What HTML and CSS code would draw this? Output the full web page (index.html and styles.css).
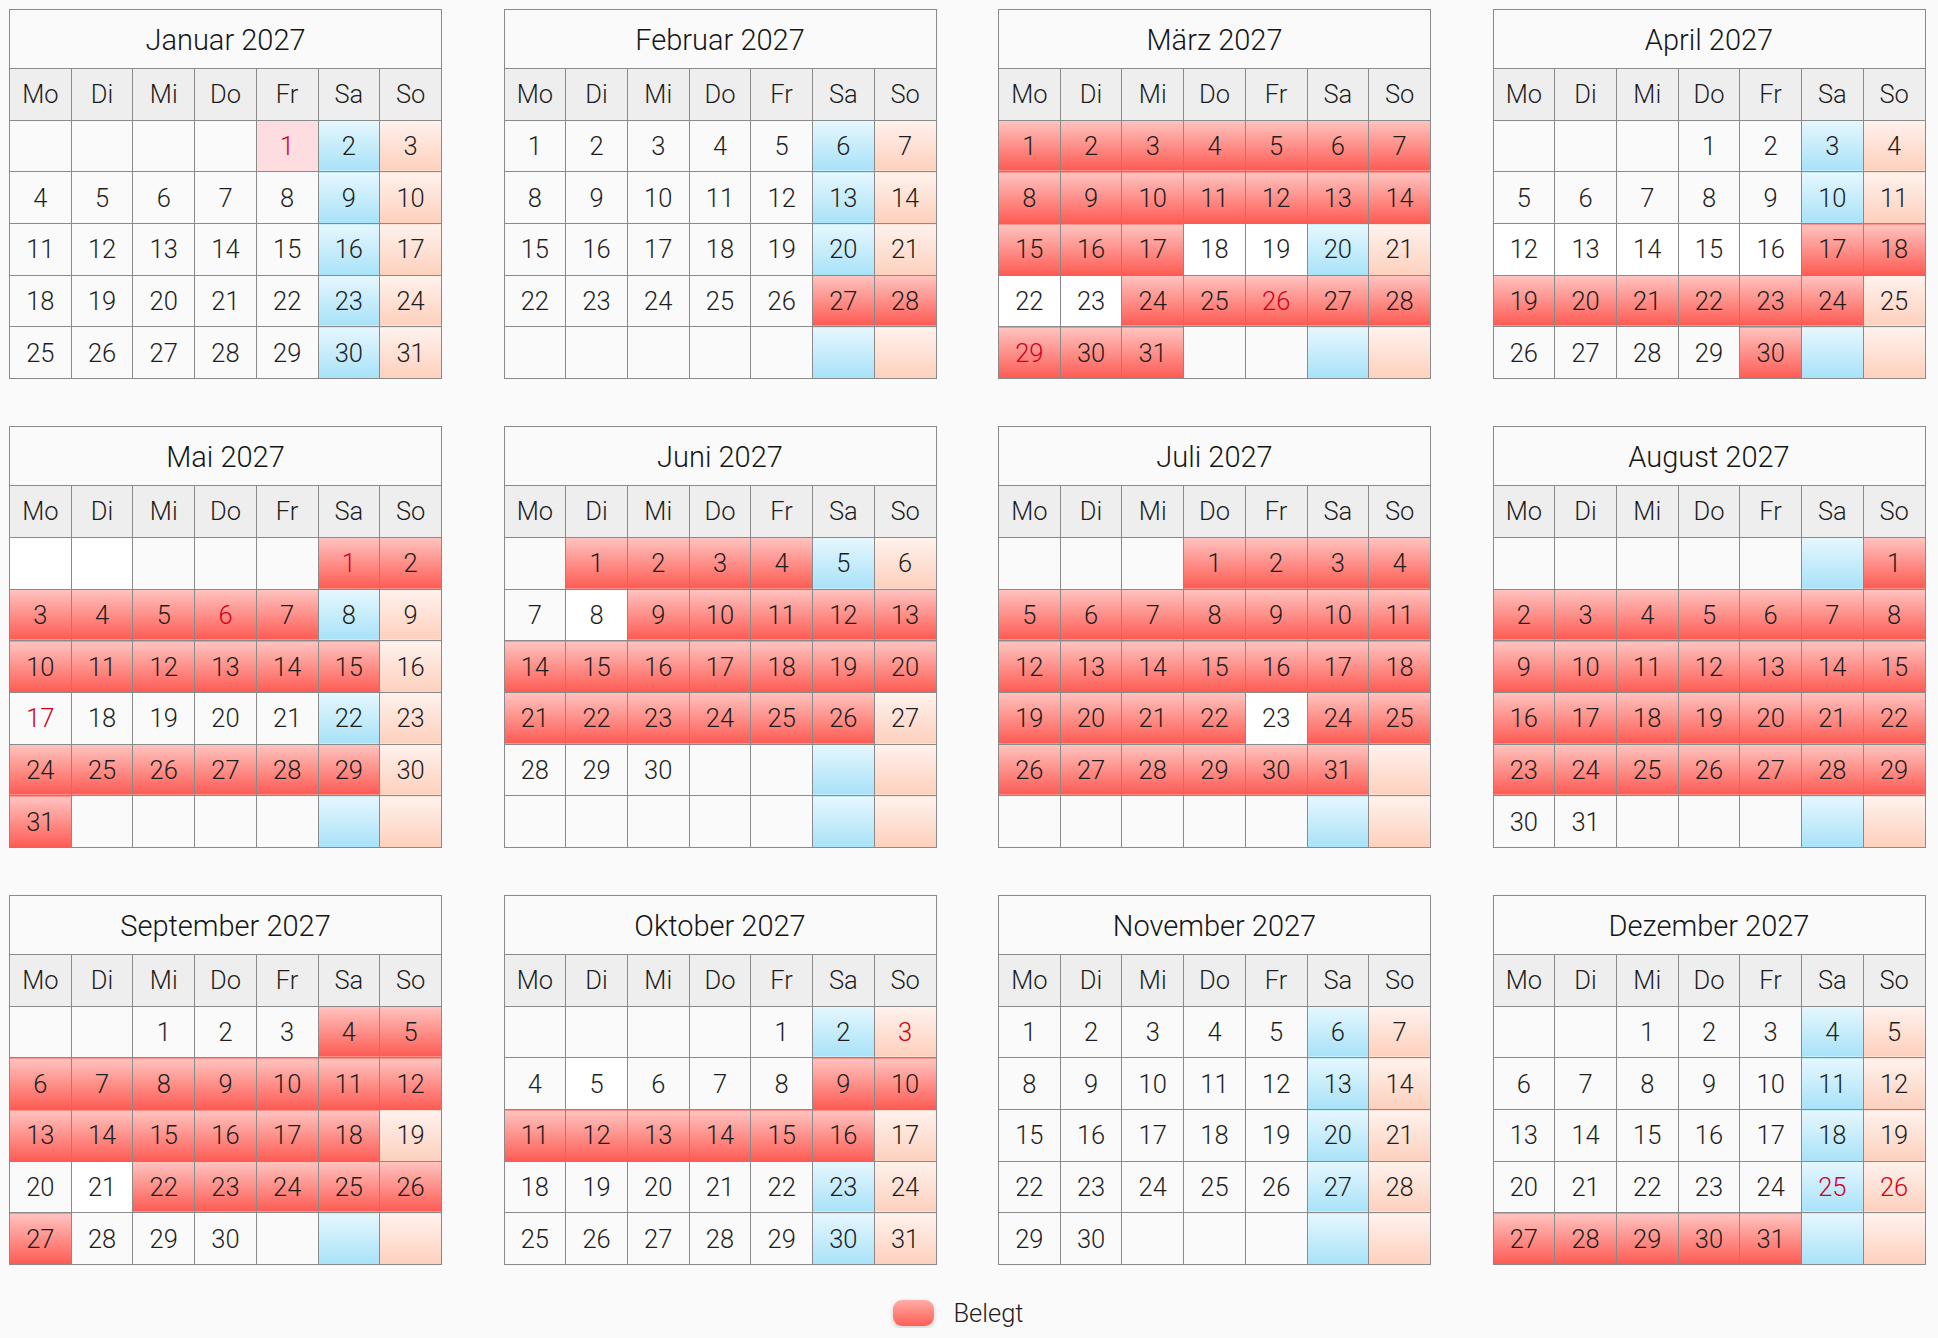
FILE: index.html
```html
<!DOCTYPE html>
<html lang="de">
<head>
<meta charset="utf-8">
<title>Belegungskalender 2027</title>
<link rel="stylesheet" href="styles.css">
</head>
<body>
<main class="year">

<table class="month">
<tr class="title"><th colspan="7">Januar 2027</th></tr>
<tr class="wd"><th>Mo</th><th>Di</th><th>Mi</th><th>Do</th><th>Fr</th><th>Sa</th><th>So</th></tr>
<tr><td></td><td></td><td></td><td></td><td class="hp">1</td><td>2</td><td>3</td></tr>
<tr><td>4</td><td>5</td><td>6</td><td>7</td><td>8</td><td>9</td><td>10</td></tr>
<tr><td>11</td><td>12</td><td>13</td><td>14</td><td>15</td><td>16</td><td>17</td></tr>
<tr><td>18</td><td>19</td><td>20</td><td>21</td><td>22</td><td>23</td><td>24</td></tr>
<tr><td>25</td><td>26</td><td>27</td><td>28</td><td>29</td><td>30</td><td>31</td></tr>
</table>

<table class="month">
<tr class="title"><th colspan="7">Februar 2027</th></tr>
<tr class="wd"><th>Mo</th><th>Di</th><th>Mi</th><th>Do</th><th>Fr</th><th>Sa</th><th>So</th></tr>
<tr><td>1</td><td>2</td><td>3</td><td>4</td><td>5</td><td>6</td><td>7</td></tr>
<tr><td>8</td><td>9</td><td>10</td><td>11</td><td>12</td><td>13</td><td>14</td></tr>
<tr><td>15</td><td>16</td><td>17</td><td>18</td><td>19</td><td>20</td><td>21</td></tr>
<tr><td>22</td><td>23</td><td>24</td><td>25</td><td>26</td><td class="b">27</td><td class="b">28</td></tr>
<tr><td></td><td></td><td></td><td></td><td></td><td></td><td></td></tr>
</table>

<table class="month">
<tr class="title"><th colspan="7">März 2027</th></tr>
<tr class="wd"><th>Mo</th><th>Di</th><th>Mi</th><th>Do</th><th>Fr</th><th>Sa</th><th>So</th></tr>
<tr><td class="b">1</td><td class="b">2</td><td class="b">3</td><td class="b">4</td><td class="b">5</td><td class="b">6</td><td class="b">7</td></tr>
<tr><td class="b">8</td><td class="b">9</td><td class="b">10</td><td class="b">11</td><td class="b">12</td><td class="b">13</td><td class="b">14</td></tr>
<tr><td class="b">15</td><td class="b">16</td><td class="b">17</td><td class="w">18</td><td class="w">19</td><td>20</td><td>21</td></tr>
<tr><td class="w">22</td><td class="w">23</td><td class="b">24</td><td class="b">25</td><td class="b h">26</td><td class="b">27</td><td class="b">28</td></tr>
<tr><td class="b h">29</td><td class="b">30</td><td class="b">31</td><td></td><td></td><td></td><td></td></tr>
</table>

<table class="month">
<tr class="title"><th colspan="7">April 2027</th></tr>
<tr class="wd"><th>Mo</th><th>Di</th><th>Mi</th><th>Do</th><th>Fr</th><th>Sa</th><th>So</th></tr>
<tr><td></td><td></td><td></td><td>1</td><td>2</td><td>3</td><td>4</td></tr>
<tr><td>5</td><td>6</td><td>7</td><td>8</td><td>9</td><td>10</td><td>11</td></tr>
<tr><td class="w">12</td><td class="w">13</td><td class="w">14</td><td class="w">15</td><td class="w">16</td><td class="b">17</td><td class="b">18</td></tr>
<tr><td class="b">19</td><td class="b">20</td><td class="b">21</td><td class="b">22</td><td class="b">23</td><td class="b">24</td><td>25</td></tr>
<tr><td>26</td><td>27</td><td>28</td><td>29</td><td class="b">30</td><td></td><td></td></tr>
</table>

<table class="month">
<tr class="title"><th colspan="7">Mai 2027</th></tr>
<tr class="wd"><th>Mo</th><th>Di</th><th>Mi</th><th>Do</th><th>Fr</th><th>Sa</th><th>So</th></tr>
<tr><td class="w"></td><td class="w"></td><td></td><td></td><td></td><td class="b h">1</td><td class="b">2</td></tr>
<tr><td class="b">3</td><td class="b">4</td><td class="b">5</td><td class="b h">6</td><td class="b">7</td><td>8</td><td>9</td></tr>
<tr><td class="b">10</td><td class="b">11</td><td class="b">12</td><td class="b">13</td><td class="b">14</td><td class="b">15</td><td>16</td></tr>
<tr><td class="h">17</td><td>18</td><td>19</td><td>20</td><td>21</td><td>22</td><td>23</td></tr>
<tr><td class="b">24</td><td class="b">25</td><td class="b">26</td><td class="b">27</td><td class="b">28</td><td class="b">29</td><td>30</td></tr>
<tr><td class="b">31</td><td></td><td></td><td></td><td></td><td></td><td></td></tr>
</table>

<table class="month">
<tr class="title"><th colspan="7">Juni 2027</th></tr>
<tr class="wd"><th>Mo</th><th>Di</th><th>Mi</th><th>Do</th><th>Fr</th><th>Sa</th><th>So</th></tr>
<tr><td></td><td class="b">1</td><td class="b">2</td><td class="b">3</td><td class="b">4</td><td>5</td><td>6</td></tr>
<tr><td>7</td><td class="w">8</td><td class="b">9</td><td class="b">10</td><td class="b">11</td><td class="b">12</td><td class="b">13</td></tr>
<tr><td class="b">14</td><td class="b">15</td><td class="b">16</td><td class="b">17</td><td class="b">18</td><td class="b">19</td><td class="b">20</td></tr>
<tr><td class="b">21</td><td class="b">22</td><td class="b">23</td><td class="b">24</td><td class="b">25</td><td class="b">26</td><td>27</td></tr>
<tr><td>28</td><td>29</td><td>30</td><td></td><td></td><td></td><td></td></tr>
<tr><td></td><td></td><td></td><td></td><td></td><td></td><td></td></tr>
</table>

<table class="month">
<tr class="title"><th colspan="7">Juli 2027</th></tr>
<tr class="wd"><th>Mo</th><th>Di</th><th>Mi</th><th>Do</th><th>Fr</th><th>Sa</th><th>So</th></tr>
<tr><td></td><td></td><td></td><td class="b">1</td><td class="b">2</td><td class="b">3</td><td class="b">4</td></tr>
<tr><td class="b">5</td><td class="b">6</td><td class="b">7</td><td class="b">8</td><td class="b">9</td><td class="b">10</td><td class="b">11</td></tr>
<tr><td class="b">12</td><td class="b">13</td><td class="b">14</td><td class="b">15</td><td class="b">16</td><td class="b">17</td><td class="b">18</td></tr>
<tr><td class="b">19</td><td class="b">20</td><td class="b">21</td><td class="b">22</td><td class="w">23</td><td class="b">24</td><td class="b">25</td></tr>
<tr><td class="b">26</td><td class="b">27</td><td class="b">28</td><td class="b">29</td><td class="b">30</td><td class="b">31</td><td></td></tr>
<tr><td></td><td></td><td></td><td></td><td></td><td></td><td></td></tr>
</table>

<table class="month">
<tr class="title"><th colspan="7">August 2027</th></tr>
<tr class="wd"><th>Mo</th><th>Di</th><th>Mi</th><th>Do</th><th>Fr</th><th>Sa</th><th>So</th></tr>
<tr><td></td><td></td><td></td><td></td><td></td><td></td><td class="b">1</td></tr>
<tr><td class="b">2</td><td class="b">3</td><td class="b">4</td><td class="b">5</td><td class="b">6</td><td class="b">7</td><td class="b">8</td></tr>
<tr><td class="b">9</td><td class="b">10</td><td class="b">11</td><td class="b">12</td><td class="b">13</td><td class="b">14</td><td class="b">15</td></tr>
<tr><td class="b">16</td><td class="b">17</td><td class="b">18</td><td class="b">19</td><td class="b">20</td><td class="b">21</td><td class="b">22</td></tr>
<tr><td class="b">23</td><td class="b">24</td><td class="b">25</td><td class="b">26</td><td class="b">27</td><td class="b">28</td><td class="b">29</td></tr>
<tr><td>30</td><td>31</td><td></td><td></td><td></td><td></td><td></td></tr>
</table>

<table class="month">
<tr class="title"><th colspan="7">September 2027</th></tr>
<tr class="wd"><th>Mo</th><th>Di</th><th>Mi</th><th>Do</th><th>Fr</th><th>Sa</th><th>So</th></tr>
<tr><td></td><td></td><td>1</td><td>2</td><td>3</td><td class="b">4</td><td class="b">5</td></tr>
<tr><td class="b">6</td><td class="b">7</td><td class="b">8</td><td class="b">9</td><td class="b">10</td><td class="b">11</td><td class="b">12</td></tr>
<tr><td class="b">13</td><td class="b">14</td><td class="b">15</td><td class="b">16</td><td class="b">17</td><td class="b">18</td><td>19</td></tr>
<tr><td>20</td><td class="w">21</td><td class="b">22</td><td class="b">23</td><td class="b">24</td><td class="b">25</td><td class="b">26</td></tr>
<tr><td class="b">27</td><td>28</td><td>29</td><td>30</td><td></td><td></td><td></td></tr>
</table>

<table class="month">
<tr class="title"><th colspan="7">Oktober 2027</th></tr>
<tr class="wd"><th>Mo</th><th>Di</th><th>Mi</th><th>Do</th><th>Fr</th><th>Sa</th><th>So</th></tr>
<tr><td></td><td></td><td></td><td></td><td>1</td><td>2</td><td class="h">3</td></tr>
<tr><td>4</td><td class="w">5</td><td>6</td><td>7</td><td>8</td><td class="b">9</td><td class="b">10</td></tr>
<tr><td class="b">11</td><td class="b">12</td><td class="b">13</td><td class="b">14</td><td class="b">15</td><td class="b">16</td><td>17</td></tr>
<tr><td>18</td><td>19</td><td>20</td><td>21</td><td>22</td><td>23</td><td>24</td></tr>
<tr><td>25</td><td>26</td><td>27</td><td>28</td><td>29</td><td>30</td><td>31</td></tr>
</table>

<table class="month">
<tr class="title"><th colspan="7">November 2027</th></tr>
<tr class="wd"><th>Mo</th><th>Di</th><th>Mi</th><th>Do</th><th>Fr</th><th>Sa</th><th>So</th></tr>
<tr><td>1</td><td>2</td><td>3</td><td>4</td><td>5</td><td>6</td><td>7</td></tr>
<tr><td>8</td><td>9</td><td>10</td><td>11</td><td>12</td><td>13</td><td>14</td></tr>
<tr><td>15</td><td>16</td><td>17</td><td>18</td><td>19</td><td>20</td><td>21</td></tr>
<tr><td>22</td><td>23</td><td>24</td><td>25</td><td>26</td><td>27</td><td>28</td></tr>
<tr><td>29</td><td>30</td><td></td><td></td><td></td><td></td><td></td></tr>
</table>

<table class="month">
<tr class="title"><th colspan="7">Dezember 2027</th></tr>
<tr class="wd"><th>Mo</th><th>Di</th><th>Mi</th><th>Do</th><th>Fr</th><th>Sa</th><th>So</th></tr>
<tr><td></td><td></td><td>1</td><td>2</td><td>3</td><td>4</td><td>5</td></tr>
<tr><td>6</td><td>7</td><td>8</td><td>9</td><td>10</td><td>11</td><td>12</td></tr>
<tr><td>13</td><td>14</td><td>15</td><td>16</td><td>17</td><td>18</td><td>19</td></tr>
<tr><td>20</td><td>21</td><td>22</td><td>23</td><td>24</td><td class="h">25</td><td class="h">26</td></tr>
<tr><td class="b">27</td><td class="b">28</td><td class="b">29</td><td class="b">30</td><td class="b">31</td><td></td><td></td></tr>
</table>

</main>
<footer class="legend">
<span class="swatch"></span><span class="legend-label">Belegt</span>
</footer>
</body>
</html>
```
FILE: styles.css
```css
html, body {
  margin: 0;
  padding: 0;
  background: #fafafa;
}
body {
  padding: 9px 0 0 9px;
  font-family: Roboto, "Liberation Sans", Arial, sans-serif;
  font-weight: 300;
  color: #1e1e1e;
}
.year {
  display: grid;
  grid-template-columns: repeat(4, 433px);
  column-gap: 61.5px;
  row-gap: 47px;
  align-items: start;
}
.month {
  width: 433px;
  border-collapse: collapse;
  table-layout: fixed;
  border: 1px solid #8a8a8a;
}
.month th, .month td {
  border: 1px solid #8a8a8a;
  padding: 0;
  text-align: center;
  vertical-align: middle;
  font-weight: 300;
  font-size: 25.5px;
  background: #fafafa;
  color: #1e1e1e;
}
.month tr {
  height: 51.7px;
}
.month tr.title {
  height: 59px;
}
.month tr.title th {
  font-size: 29px;
  color: #151515;
  padding-top: 2px;
}
.month tr.wd th {
  background: #eeeeee;
}
.month tr > :nth-child(6) {
  background: linear-gradient(to bottom, #e6f7fe, #a8e2f8);
}
.month tr > :nth-child(7) {
  background: linear-gradient(to bottom, #fff2ed, #fdd0bd);
}
.month tr.title th {
  background: #fafafa;
}
.month td.w {
  background: #ffffff;
}
.month td.hp {
  background: #fddde0;
  color: #d0021b;
}
.month td.b {
  background: linear-gradient(to bottom, #ffc4c0, #fd5b53);
}
.month td.h {
  color: #d0021b;
}
.legend {
  display: flex;
  justify-content: center;
  align-items: center;
  gap: 19px;
  padding: 33px 0 0 0;
  margin-left: -30px;
}
.swatch {
  width: 41px;
  height: 26px;
  border-radius: 9px;
  background: linear-gradient(to bottom, #ffaca6, #fe5e55);
  box-shadow: 0 2px 5px rgba(0, 0, 0, 0.18);
}
.legend-label {
  font-size: 25.5px;
  color: #1e1e1e;
}
```
